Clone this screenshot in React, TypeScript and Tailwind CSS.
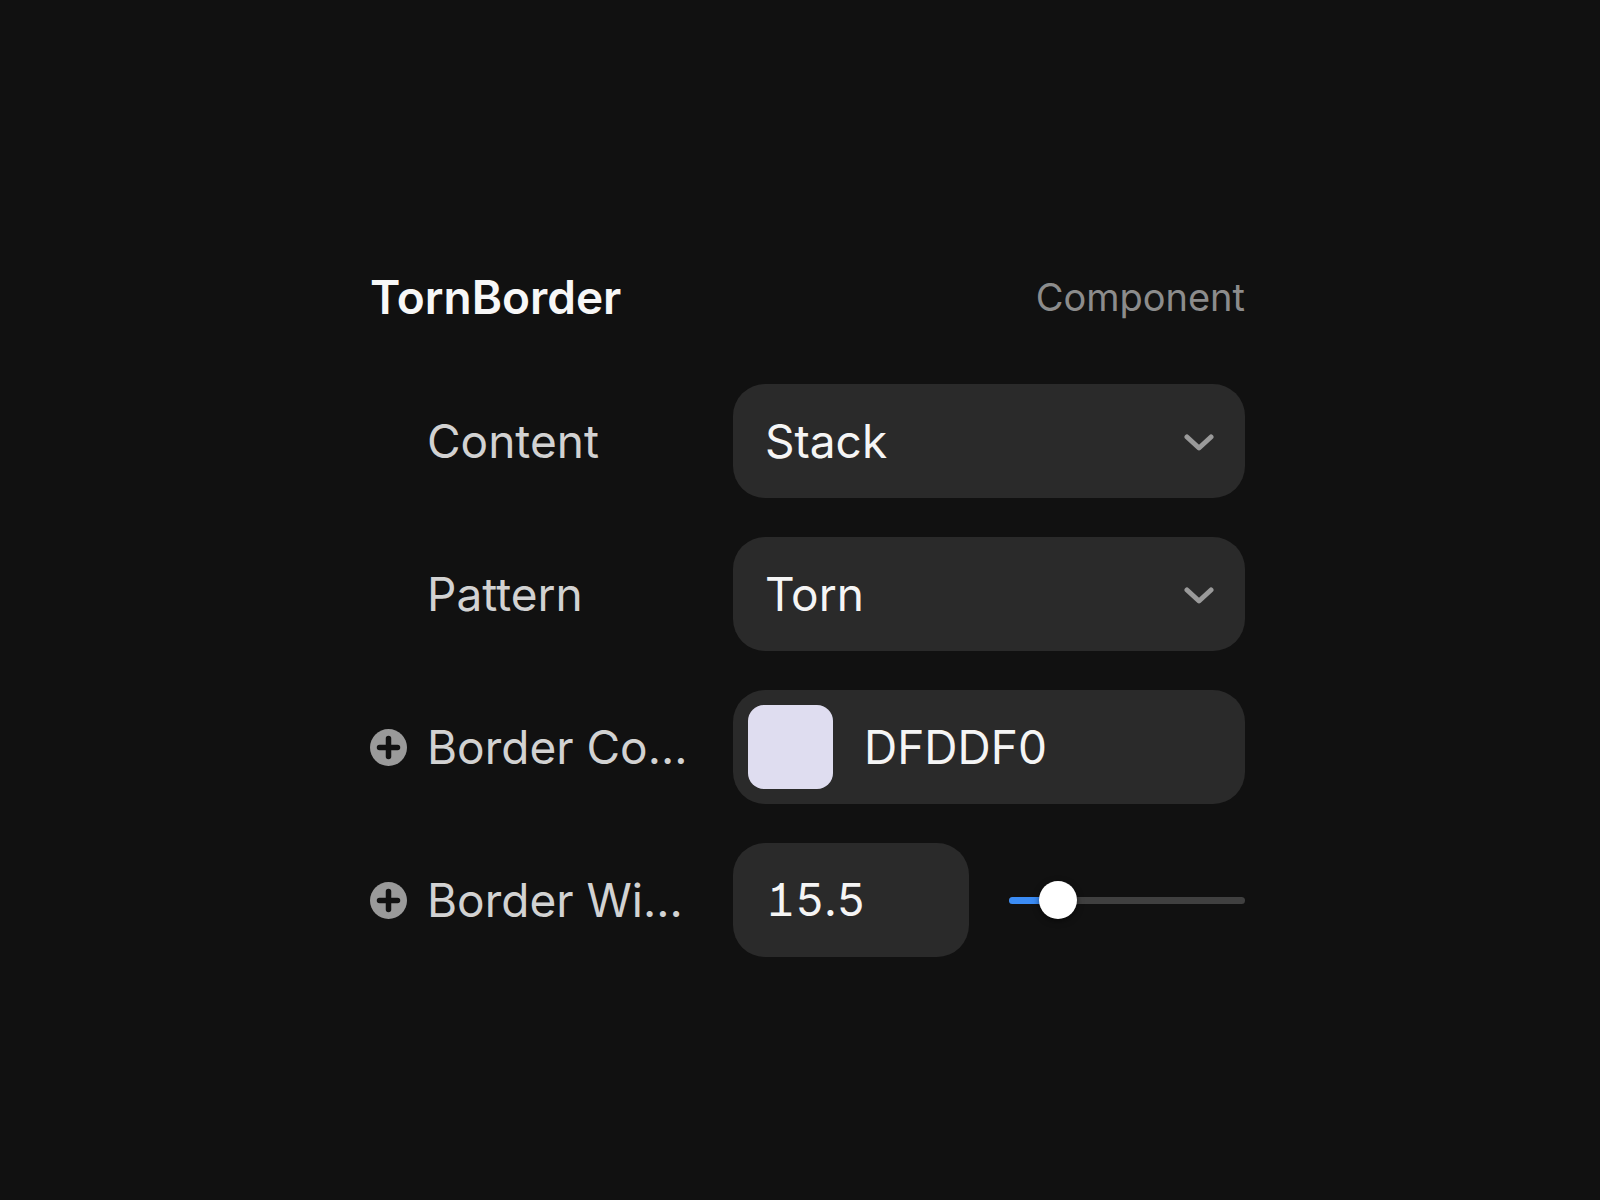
import React from "react";

const Chevron = () => (
  <svg width="30" height="18" viewBox="0 0 30 18" fill="none" className="shrink-0 mt-[3px]">
    <path d="M3 3 L15 14 L27 3" stroke="#9a9a9a" strokeWidth="5" strokeLinecap="round" strokeLinejoin="round" />
  </svg>
);

const PlusIcon = () => (
  <svg width="37" height="37" viewBox="0 0 37 37" className="shrink-0">
    <circle cx="18.5" cy="18.5" r="18.5" fill="#9a9a9a" />
    <path d="M18.5 9.5 V27.5 M9.5 18.5 H27.5" stroke="#111111" strokeWidth="5.5" strokeLinecap="round" />
  </svg>
);

function Row({ plus, label, children }: { plus?: boolean; label: string; children: React.ReactNode }) {
  return (
    <div className="flex items-center h-[114px]">
      <div className="w-[37px] shrink-0 flex items-center justify-center">{plus ? <PlusIcon /> : null}</div>
      <div className="ml-[20px] w-[306px] shrink-0 text-[46px] text-[#d2d2d2] whitespace-nowrap overflow-hidden">{label}</div>
      <div className="flex-1 h-full flex items-center">{children}</div>
    </div>
  );
}

function Select({ value }: { value: string }) {
  return (
    <div className="w-full h-full rounded-[32px] bg-[#2a2a2a] flex items-center pl-[32px] pr-[31px]">
      <span className="flex-1 text-[46px] text-[#f5f5f5]">{value}</span>
      <Chevron />
    </div>
  );
}

export default function App() {
  return (
    <div
      className="w-[1600px] h-[1200px] bg-[#111111] pt-[260px] pl-[370px]"
      style={{ fontFamily: "Inter, 'Noto Sans', sans-serif" }}
    >
      <div className="w-[875px] flex flex-col">
        <div className="h-[74px] flex items-center justify-between">
          <span className="text-[46px] font-semibold text-[#f7f7f7] leading-none">TornBorder</span>
          <span className="text-[38px] text-[#8c8c8c] leading-none">Component</span>
        </div>
        <div className="mt-[50px] flex flex-col gap-[39px]">
          <Row label="Content">
            <Select value="Stack" />
          </Row>
          <Row label="Pattern">
            <Select value="Torn" />
          </Row>
          <Row plus label="Border Co...">
            <div className="w-full h-full rounded-[32px] bg-[#2a2a2a] flex items-center pl-[15px]">
              <div className="w-[85px] h-[84px] rounded-[16px] bg-[#DFDDF0]" />
              <span className="ml-[31px] text-[46px] text-[#f5f5f5]">DFDDF0</span>
            </div>
          </Row>
          <Row plus label="Border Wi...">
            <div className="w-[236px] shrink-0 h-full rounded-[32px] bg-[#2a2a2a] flex items-center pl-[33px]">
              <span className="text-[45px] text-[#f5f5f5] [font-feature-settings:'tnum','cv01']">15.5</span>
            </div>
            <div className="ml-[40px] flex-1 relative h-[40px] flex items-center">
              <div className="w-full h-[7px] rounded-full bg-[#404040] flex">
                <div className="w-[49px] h-full rounded-full bg-[#3b8cf5]" />
              </div>
              <div className="absolute left-[30px] top-[1px] w-[38px] h-[38px] rounded-full bg-white shadow-[0_2px_6px_rgba(0,0,0,0.5)]" />
            </div>
          </Row>
        </div>
      </div>
    </div>
  );
}
